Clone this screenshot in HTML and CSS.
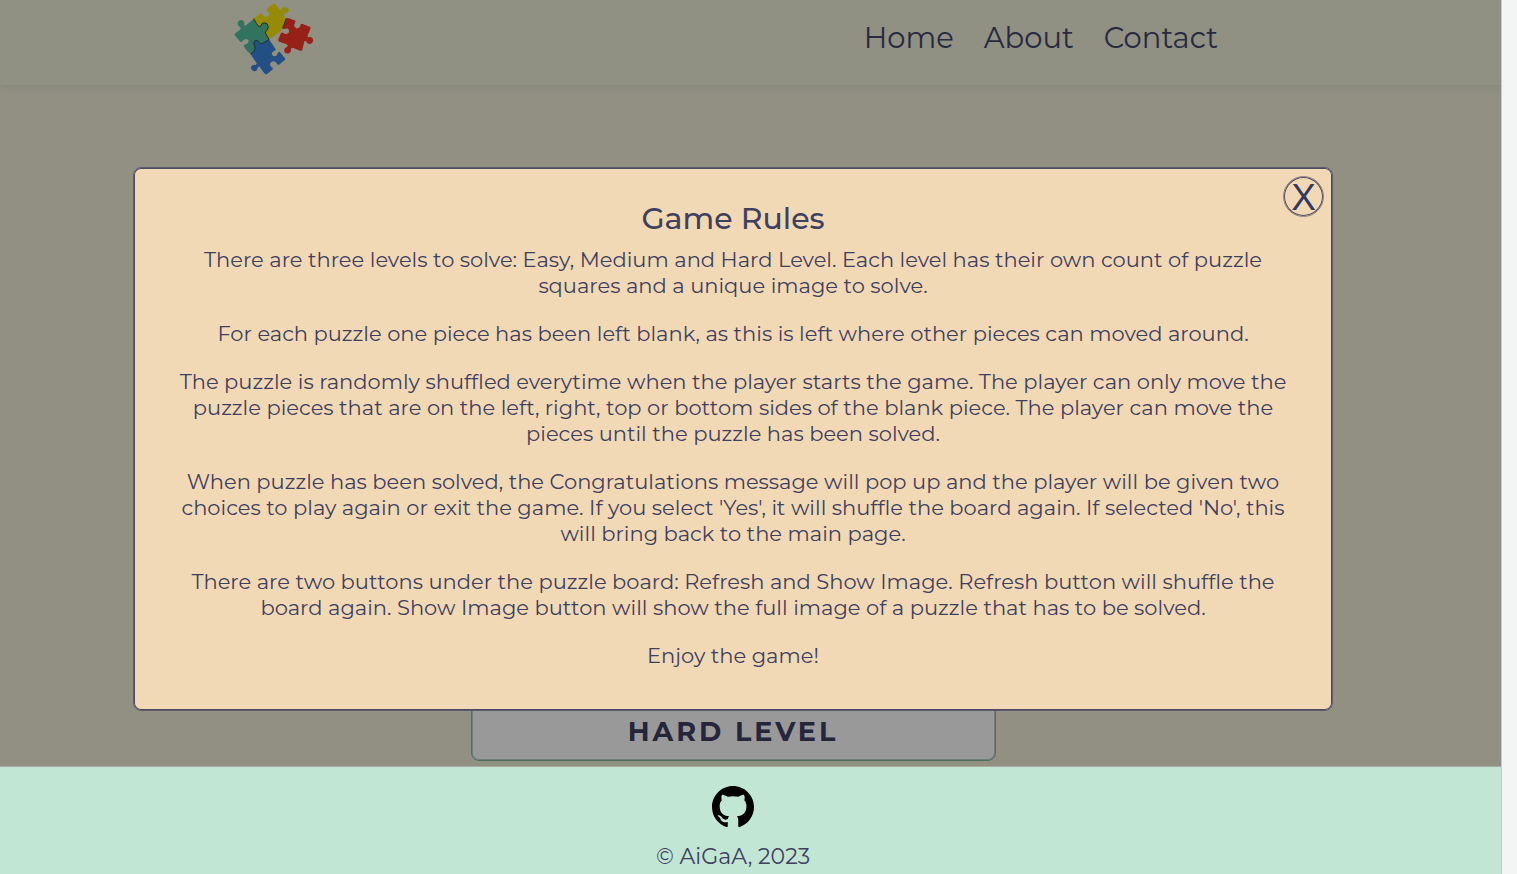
FILE: index.html
```html
<!DOCTYPE html>
<html lang="en">
<head>
<meta charset="utf-8">
<meta name="viewport" content="width=device-width, initial-scale=1">
<title>Puzzle Game</title>
<link rel="stylesheet" href="styles.css">
</head>
<body>
<div class="page">
  <header class="header">
    <a class="logo" href="#" aria-label="Puzzle home">
      <svg class="logo-art" viewBox="30 9 240 216" aria-hidden="true">
        <path fill="#978a05" d="M89 56L108 41Q112 38 116 45Q123 55 132 48Q140 40 130 33Q124 30 131 25L147 12Q151 8 155 14L166 28Q170 33 173 29Q176 20 185 22Q196 25 194 34Q190 42 182 41Q177 42 180 47L187 55L176 85Q172 94 164 98L135 118Q127 108 124 99Q124 94 129 91Q137 81 129 71Q119 65 113 72Q112 81 106 81Q100 78 97 70Z"/>
        <path fill="#32735f" d="M89 57L97 70Q101 78 107 80Q112 80 113 72Q119 65 129 71Q137 81 129 91Q124 94 124 99L135 118L118 129Q110 135 107 128Q101 117 93 122Q86 128 91 137Q96 144 91 151L80 163Q68 153 60 140Q57 134 65 133Q76 130 73 121Q67 114 59 120Q53 128 49 125L32 106Q30 103 35 99L47 90Q53 86 48 81Q38 76 42 66Q48 57 58 62Q63 67 60 75Q61 80 67 75Z"/>
        <path fill="#214f86" d="M135 118L154 146Q157 151 151 152Q141 156 144 164Q151 172 159 166Q161 155 167 155L182 174Q186 178 181 181L165 194Q160 196 158 190Q151 180 142 186Q134 193 142 201Q150 205 144 210L130 221Q125 225 121 220L108 202Q104 196 101 204Q98 216 88 213Q79 209 82 199Q86 193 94 195Q100 194 97 188L80 163L91 151Q96 144 91 137Q86 128 93 122Q101 117 107 128Q110 135 118 129Z"/>
        <path fill="#972017" d="M187 56Q188 52 194 55L211 61Q217 62 213 68Q207 78 216 84Q226 87 229 77Q229 70 236 72L257 80Q262 81 259 87L251 106Q249 112 254 112Q259 109 266 115Q270 123 264 129Q256 135 249 128Q247 120 241 124L235 149Q234 154 228 152L208 144Q202 142 200 148Q203 155 195 160Q186 163 181 155Q179 146 187 142Q195 138 188 133L166 125Q161 123 163 118L170 101Q173 95 178 99Q187 105 194 98Q198 89 189 85Q182 88 176 86Z"/>
        <path class="logo-line" d="M89 56L97 70Q101 78 107 80Q112 80 113 72Q119 65 129 71Q137 81 129 91Q124 94 124 99L135 118L118 129Q110 135 107 128Q101 117 93 122Q86 128 91 137Q96 144 91 151L80 163M187 55L176 85"/>
      </svg>
    </a>
    <nav class="nav" aria-label="Main">
      <a href="#">Home</a>
      <a href="#">About</a>
      <a href="#">Contact</a>
    </nav>
  </header>

  <main class="stage">
    <button class="level" type="button">HARD LEVEL</button>
    <section class="modal" role="dialog" aria-labelledby="rules-title">
      <button class="close" type="button" aria-label="Close">X</button>
      <h2 id="rules-title">Game Rules</h2>
      <p>There are three levels to solve: Easy, Medium and Hard Level. Each level has their own count of puzzle squares and a unique image to solve.</p>
      <p>For each puzzle one piece has been left blank, as this is left where other pieces can moved around.</p>
      <p>The puzzle is randomly shuffled everytime when the player starts the game. The player can only move the puzzle pieces that are on the left, right, top or bottom sides of the blank piece. The player can move the pieces until the puzzle has been solved.</p>
      <p>When puzzle has been solved, the Congratulations message will pop up and the player will be given two choices to play again or exit the game. If you select 'Yes', it will shuffle the board again. If selected 'No', this will bring back to the main page.</p>
      <p>There are two buttons under the puzzle board: Refresh and Show Image. Refresh button will shuffle the board again. Show Image button will show the full image of a puzzle that has to be solved.</p>
      <p>Enjoy the game!</p>
    </section>
  </main>

  <footer class="footer">
    <a class="github" href="#" aria-label="GitHub">
      <svg viewBox="0 0 16 16" aria-hidden="true"><path d="M8 0C3.58 0 0 3.58 0 8c0 3.54 2.29 6.53 5.47 7.59.4.07.55-.17.55-.38 0-.19-.01-.82-.01-1.49-2.01.37-2.53-.49-2.69-.94-.09-.23-.48-.94-.82-1.13-.28-.15-.68-.52-.01-.53.63-.01 1.08.58 1.23.82.72 1.21 1.87.87 2.33.66.07-.52.28-.87.51-1.07-1.78-.2-3.64-.89-3.64-3.95 0-.87.31-1.59.82-2.15-.08-.2-.36-1.02.08-2.12 0 0 .67-.21 2.2.82a7.6 7.6 0 0 1 4 0c1.53-1.04 2.2-.82 2.2-.82.44 1.1.16 1.92.08 2.12.51.56.82 1.27.82 2.15 0 3.07-1.87 3.75-3.65 3.95.29.25.54.73.54 1.48 0 1.07-.01 1.93-.01 2.2 0 .21.15.46.55.38A8 8 0 0 0 16 8c0-4.42-3.58-8-8-8z"/></svg>
    </a>
    <span>© AiGaA, 2023</span>
  </footer>
</div>
</body>
</html>
```
FILE: styles.css
```css
* {
  box-sizing: border-box;
}

body {
  margin: 0;
  background: #f3f5f4;
  color: #3f3f60;
  font-family: Montserrat, Inter, "Open Sans", sans-serif;
  font-weight: 400;
}

.page {
  display: flex;
  flex-direction: column;
  min-height: 100vh;
  margin-right: 15px;
  border-right: 1px solid #c9cac7;
  background: #919083;
}

.header {
  display: flex;
  align-items: flex-start;
  justify-content: space-between;
  height: 85px;
  padding: 3px 283px 0 234px;
  background: #909083;
  box-shadow: 0 2px 6px #84857a;
  clip-path: inset(0 0 -12px 0);
}

.logo-art {
  display: block;
  width: 80px;
  height: 72px;
}

.logo-line {
  fill: none;
  stroke: #1c302b;
  stroke-width: 3;
}

.nav {
  display: flex;
  gap: 30px;
  padding-top: 17px;
  font-size: 29px;
  line-height: 36px;
}

.nav a {
  color: #29293f;
  text-decoration: none;
}

.stage {
  position: relative;
  display: flex;
  flex: 1;
  align-items: flex-end;
  justify-content: center;
  padding: 82px 168px 5px 133px;
}

.level {
  width: 525px;
  height: 60px;
  padding: 0;
  border: 1px solid #4c6f62;
  border-radius: 8px;
  background: #999999;
  box-shadow: inset 0 0 0 1px #6f8078;
  color: #25253c;
  font: inherit;
  font-size: 27px;
  font-weight: 700;
  letter-spacing: 3px;
}

.modal {
  position: absolute;
  top: 82px;
  right: 168px;
  left: 133px;
  padding: 32px 40px 19px;
  border: 1px solid #5c5c6b;
  border-radius: 8px;
  background: #f2d9b5;
  box-shadow: inset 0 0 0 1px #4a4864;
  text-align: center;
}

.modal h2 {
  margin: 0 0 9px;
  font-size: 30px;
  font-weight: 500;
  line-height: 38px;
}

.modal p {
  margin: 0 0 22px;
  font-size: 21px;
  line-height: 26px;
}

.close {
  position: absolute;
  top: 8px;
  right: 8px;
  width: 41px;
  height: 41px;
  padding: 2px 0 0;
  border: 1px solid #8d8083;
  border-radius: 50%;
  background: transparent;
  box-shadow: inset 0 0 0 1px #4a4864;
  color: #34395e;
  font-family: "Liberation Sans", sans-serif;
  font-size: 37px;
  line-height: 37px;
}

.footer {
  display: flex;
  flex-direction: column;
  align-items: center;
  gap: 15px;
  padding: 19px 35px 3px 0;
  border-top: 1px solid #a9aaa0;
  background: #c2e6d4;
  font-size: 22px;
  line-height: 28px;
}

.github svg {
  display: block;
  width: 42px;
  height: 42px;
  fill: #000000;
}
```
